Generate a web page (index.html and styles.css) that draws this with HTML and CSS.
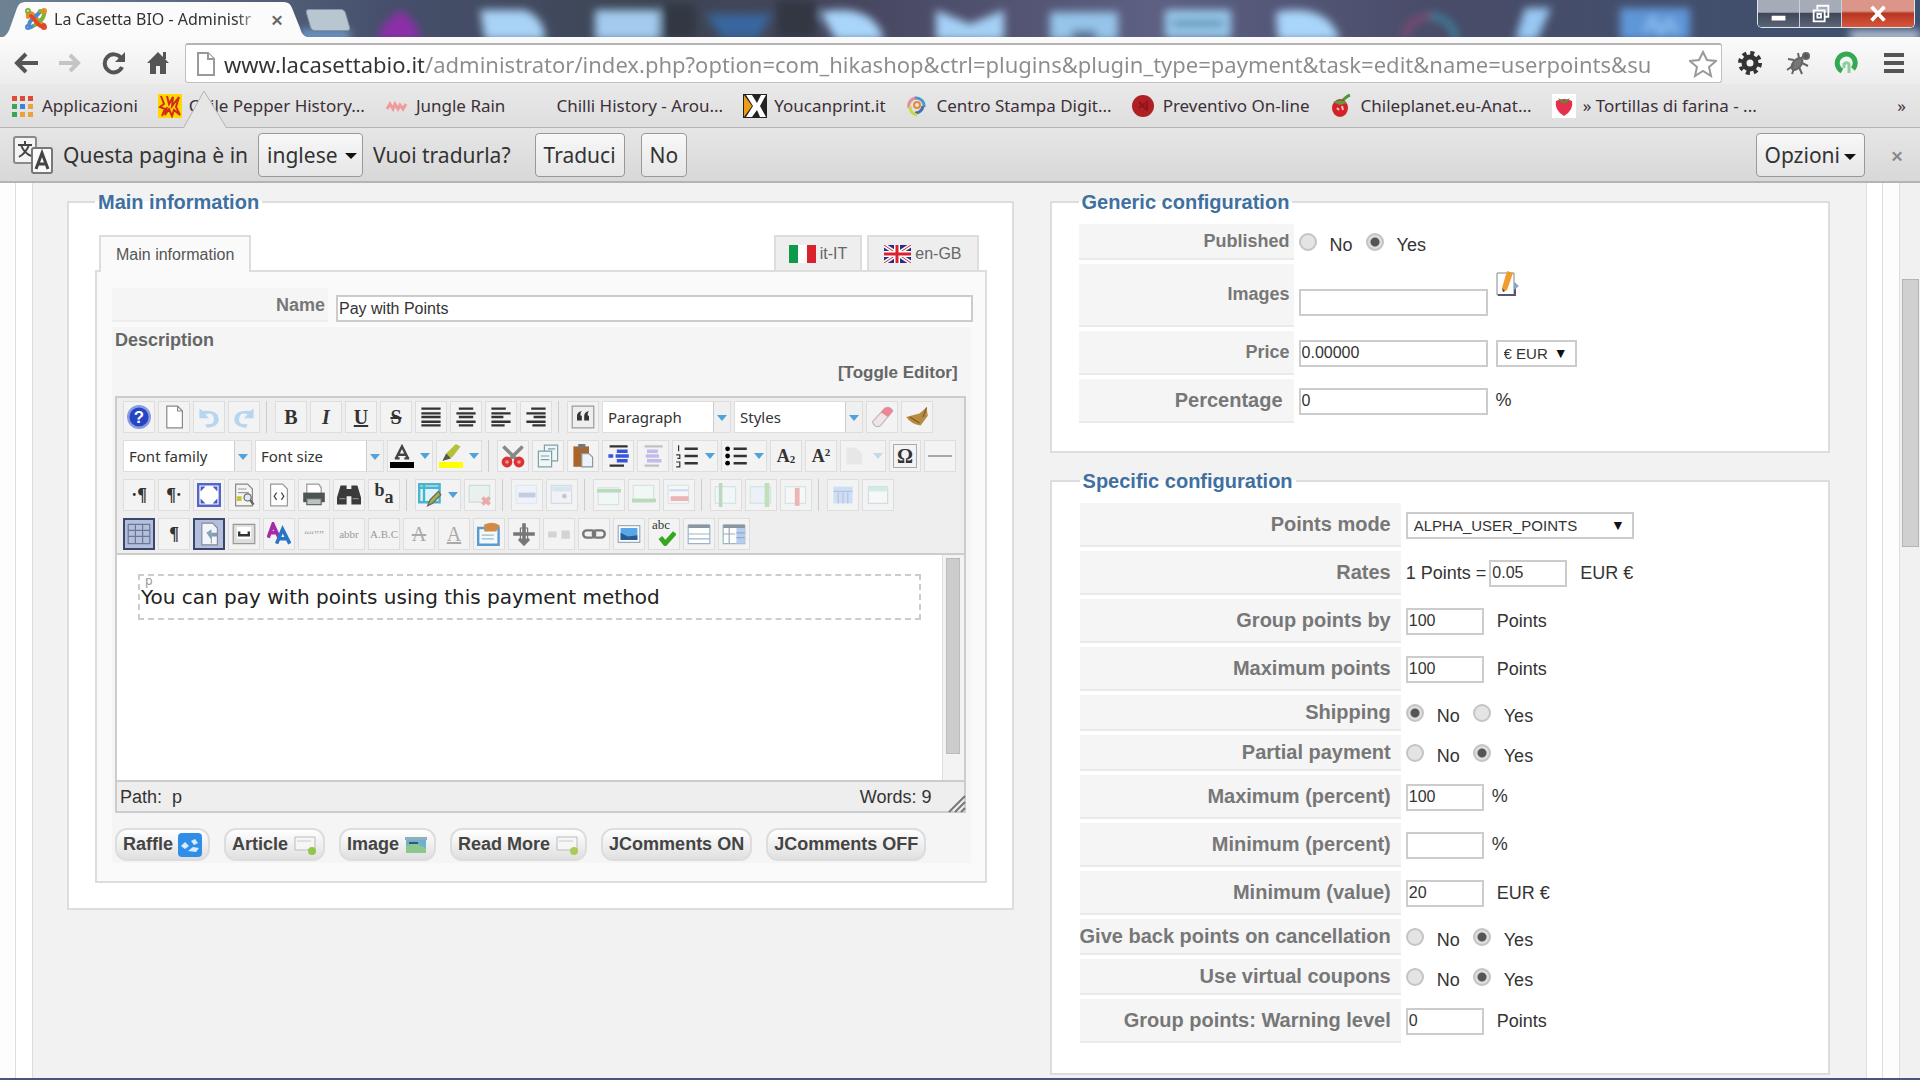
FILE: index.html
```html
<!DOCTYPE html>
<html lang="it">
<head>
<meta charset="UTF-8">
<title>La Casetta BIO - Administration</title>
<link rel="stylesheet" href="styles.css">
</head>
<body>

<!-- window title bar -->
<div class="titlebar">
	<svg class="wallpaper" viewBox="0 0 1920 37" preserveAspectRatio="none">
		<defs>
			<filter id="soft" x="-20%" y="-50%" width="140%" height="200%"><feGaussianBlur stdDeviation="4"/></filter>
			<linearGradient id="sky" x1="0" x2="1" y1="0" y2="0">
				<stop offset="0" stop-color="#6d8294"/><stop offset=".2" stop-color="#46506c"/><stop offset=".34" stop-color="#3d4553"/>
				<stop offset=".45" stop-color="#474760"/><stop offset=".6" stop-color="#5d6083"/><stop offset=".75" stop-color="#484c68"/><stop offset="1" stop-color="#3d5170"/>
			</linearGradient>
		</defs>
		<rect width="1920" height="37" fill="url(#sky)"/>
		<g filter="url(#soft)">
			<path d="M300 30h50v10h-50z" fill="#6f9ccc"/>
			<path d="M378 40q0-14 22-30q20 14 20 30z" fill="#8c2fa8"/>
			<path d="M480 10h45q20 8 20 30h-60z" fill="#a9d2f7"/>
			<path d="M595 10h65v30h-65z" fill="#a2cbee"/>
			<path d="M662 4h34v34h-34zM776 0h40v38h-40z" fill="#303743"/>
			<path d="M706 14h66l-14 24h-36z" fill="#37669f"/>
			<path d="M820 12q54-10 64 28h-48z" fill="#a9d5fa"/>
			<path d="M936 10l34 14 34-14v30h-68z" fill="#a4d0f6"/>
			<path d="M1050 12h68v28h-68z" fill="#96c4ea"/>
			<path d="M1072 30h24v10h-24z" fill="#5b7999"/>
			<path d="M1165 10h66v28h-66z" fill="#99caed"/>
			<path d="M1172 20h52v7h-52z" fill="#5b8eb0"/>
			<path d="M1276 12q52-10 64 28h-62z" fill="#a9d5fa"/>
			<path d="M1404 40a26 26 0 0 1 26-24" fill="none" stroke="#83486f" stroke-width="6"/>
			<path d="M1430 16a26 26 0 0 1 26 24" fill="none" stroke="#3c86a5" stroke-width="6"/>
			<path d="M1525 8h26l-14 32h-22z" fill="#97c7f2"/>
			<path d="M1620 8h70v32h-70z" fill="#5e96d8"/>
			<path d="M1645 32l8-14 8 16 8-14 8 14" fill="none" stroke="#8fc1f2" stroke-width="4"/>
			<path d="M1850 31h70v9h-70z" fill="#c3d3e2"/>
		</g>
	</svg>
	<div class="tab">
		<svg class="tab-shape" viewBox="0 0 304 37" preserveAspectRatio="none"><path d="M0 37Q5 35 8 25L14 8Q16 2 22 2H281Q287 2 289 8L297 28Q299 36 304 37z" fill="#fbfbfb"/></svg>
		<svg class="ico24 tab-ico" viewBox="0 0 24 24" fill="none" stroke-width="4" stroke-linecap="round">
			<path d="M4 10q-1-4 2-4t6 5l6 6" stroke="#f08c1e"/><path d="M9 19q-4 3-4-1t5-7l6-6" stroke="#4a8bd0"/>
			<path d="M16 4q5 0 4 4t-4 6l-5 4" stroke="#7ab33c"/><path d="M7 9l8 9q4 3 5 0" stroke="#e0452c"/>
			<circle cx="4" cy="4" r="1" stroke="#7ab33c"/><circle cx="20" cy="4" r="1" stroke="#f08c1e"/><circle cx="4" cy="20" r="1" stroke="#4a8bd0"/><circle cx="20" cy="20" r="1" stroke="#e0452c"/>
		</svg>
		<span class="tab-title">La Casetta BIO - Administr</span>
		<button class="tab-close" aria-label="Chiudi scheda">×</button>
	</div>
	<button class="tab-new" aria-label="Nuova scheda"></button>
	<div class="winbtns">
		<button aria-label="Riduci"><svg viewBox="0 0 24 24"><path d="M4 14h15v5H4z" fill="#fff"/></svg></button>
		<button aria-label="Ripristina"><svg viewBox="0 0 24 24" fill="none" stroke="#fff" stroke-width="2"><path d="M8 7V3h12v12h-4"/><path d="M4 8h12v12H4zM8 12h4v4H8z"/></svg></button>
		<button class="win-close" aria-label="Chiudi"><svg viewBox="0 0 24 24"><path d="M5 4l14 15M19 4L5 19" stroke="#fff" stroke-width="4"/></svg></button>
	</div>
</div>

<!-- navigation -->
<div class="navbar">
	<button class="nav" aria-label="Indietro"><svg viewBox="0 0 24 24" fill="none" stroke="#555" stroke-width="4"><path d="M24 12H4M12 3L3 12l9 9"/></svg></button>
	<button class="nav" aria-label="Avanti"><svg viewBox="0 0 24 24" fill="none" stroke="#c4c4c4" stroke-width="4"><path d="M1 12h18M12 4l8 8-8 8"/></svg></button>
	<button class="nav" aria-label="Ricarica"><svg viewBox="0 0 24 24" fill="none" stroke="#555" stroke-width="4"><path d="M20 16a9 9 0 1 1-1-9"/><path d="M23 1v10H13z" fill="#555" stroke="none"/></svg></button>
	<button class="nav" aria-label="Pagina iniziale"><svg viewBox="0 0 24 24" fill="#555"><path d="M12 1l11 11h-3v11h-6v-8h-4v8H4V12H1z"/><path d="M17 1h3v7h-3z"/></svg></button>
	<div class="omnibox">
		<svg class="ico24" viewBox="0 0 24 24" fill="#fff" stroke="#999" stroke-width="2"><path d="M4 1h10l6 6v16H4z"/><path d="M14 1v6h6"/></svg>
		<input type="text" class="url" aria-label="Indirizzo" value="www.lacasettabio.it/administrator/index.php?option=com_hikashop&amp;ctrl=plugins&amp;plugin_type=payment&amp;task=edit&amp;name=userpoints&amp;su">
		<button class="star" aria-label="Preferiti"><svg viewBox="0 0 28 28" fill="#fff" stroke="#999" stroke-width="2"><path d="M14 2l4 8 9 1-7 6 2 9-8-5-8 5 2-9-7-6 9-1z"/></svg></button>
	</div>
	<button class="nav" aria-label="Impostazioni"><svg viewBox="0 0 24 24" fill="none" stroke="#333"><circle cx="12" cy="12" r="6" stroke-width="5"/><circle cx="12" cy="12" r="10" stroke-width="4" stroke-dasharray="4 3.85"/></svg></button>
	<button class="nav" aria-label="Firebug"><svg viewBox="0 0 24 24" stroke="#666" stroke-width="2"><ellipse cx="11" cy="13" rx="4" ry="7" transform="rotate(40 11 13)" fill="#777"/><path d="M15 7l6-4M8 9L2 8M8 14l-7 5M13 16l3 7M16 12l6 3M13 7l-1-5M8 18l-2 5" fill="none"/><circle cx="20" cy="5" r="3" fill="#555"/></svg></button>
	<button class="nav" aria-label="Estensione"><svg viewBox="0 0 24 24" fill="none" stroke="#35a853" stroke-width="5"><path d="M8 20A9 9 0 1 1 19 18"/><path d="M15 22v-9a3 3 0 0 0-5 0v4" stroke="#8ccf9c" stroke-width="3"/></svg></button>
	<button class="nav" aria-label="Menu"><svg viewBox="0 0 24 24" fill="#555"><path d="M2 2h20v4H2zM2 10h20v4H2zM2 18h20v4H2z"/></svg></button>
</div>

<!-- bookmarks -->
<div class="bookmarks">
	<a href="#"><svg class="ico24" viewBox="0 0 24 24"><path d="M1 2h5v5H1zM9 2h5v5H9zM17 2h5v5h-5z" fill="#dd4b39"/><path d="M1 10h5v5H1z" fill="#3da35a"/><path d="M9 10h5v5H9z" fill="#3b82d8"/><path d="M17 10h5v5h-5z" fill="#e8a33d"/><path d="M1 18h5v5H1z" fill="#3da35a"/><path d="M9 18h5v5H9zM17 18h5v5h-5z" fill="#e8a33d"/></svg>Applicazioni</a>
	<a href="#"><svg class="ico24" viewBox="0 0 24 24"><path d="M0 0h24v24H0z" fill="#ffd800"/><path d="M3 2l3 8-4 3 5 2-3 7M9 2l2 8 4-7-1 9 7-9-3 10 4 8-6-5-2 6-3-7-4 6 2-8" fill="none" stroke="#d42a1c" stroke-width="2"/></svg>Chile Pepper History...</a>
	<a href="#"><svg class="ico24" viewBox="0 0 24 24"><path d="M2 15l3-5 3 5 2-5 3 5 2-4 3 4 3-5" fill="none" stroke="#f29a9a" stroke-width="3"/></svg>Jungle Rain</a>
	<a href="#"><svg class="ico24" viewBox="0 0 24 24"></svg>Chilli History - Arou...</a>
	<a href="#"><svg class="ico24" viewBox="0 0 24 24"><path d="M0 0h24v24H0z" fill="#222"/><path d="M1 1l8 11-8 11z" fill="#f09a1a"/><path d="M3 1h6l5 8 4-8h5l-6 11 6 11h-6l-3-7-5 7H3l7-11z" fill="#fff"/></svg>Youcanprint.it</a>
	<a href="#"><svg class="ico24" viewBox="0 0 24 24" fill="none" stroke-width="3"><path d="M3 14a8 8 0 0 1 7-10" stroke="#e88a9a"/><path d="M9 4a8 8 0 0 1 9 9" stroke="#4a98d0"/><path d="M17 12a8 8 0 0 1-8 7" stroke="#4870a8"/><path d="M4 12q0 8 7 9" stroke="#c8d84a"/><circle cx="11" cy="11" r="3" stroke="#e8883a" stroke-width="2"/></svg>Centro Stampa Digit...</a>
	<a href="#"><svg class="ico24" viewBox="0 0 24 24"><circle cx="11" cy="12" r="11" fill="#b01f24"/><path d="M7 8l8 8M15 7v10M7 14l6-5" stroke="#8c1519" stroke-width="2"/></svg>Preventivo On-line</a>
	<a href="#"><svg class="ico24" viewBox="0 0 24 24"><path d="M11 8Q17 2 20 1" fill="none" stroke="#4d9a3a" stroke-width="3"/><ellipse cx="10" cy="14" rx="8" ry="9" fill="#d3222a"/><path d="M3 8q8-4 14 1l-7 2z" fill="#58a040"/><path d="M7 14l2 2M12 12l1 4" stroke="#fbb" stroke-width="2"/></svg>Chileplanet.eu-Anat...</a>
	<a href="#"><svg class="ico24" viewBox="0 0 24 24"><path d="M0 0h24v24H0z" fill="#fff"/><path d="M12 22Q2 16 4 7q8-4 16 0 2 9-8 15z" fill="#e62e4d"/><path d="M6 4l6 3 6-3-3 5H9z" fill="#5d8a3a"/></svg>» Tortillas di farina - ...</a>
	<a href="#" class="more">»</a>
</div>

<!-- translate bar -->
<div class="infobar">
	<svg class="pointer" viewBox="0 0 42 38"><path d="M0 38L20 1l22 37z" fill="#e6e6e6"/><path d="M0 37L20 1l22 36" fill="none" stroke="#b4b4b4"/></svg>
	<svg class="translate-ico" viewBox="0 0 40 38"><rect x="1" y="1" width="22" height="26" rx="2" fill="#f4f4f4" stroke="#8a8a8a" stroke-width="2"/><path d="M5 9h14M12 5v4M16 9q-3 8-10 12M8 9q3 8 10 11" fill="none" stroke="#444" stroke-width="2"/><rect x="19" y="12" width="20" height="25" rx="2" fill="#fafafa" stroke="#777" stroke-width="2"/><path d="M23 33l6-16 6 16M25 28h8" fill="none" stroke="#444" stroke-width="3"/></svg>
	<label for="lang">Questa pagina è in</label>
	<span class="pick"><select id="lang" class="barbtn"><option>inglese</option></select></span>
	<span>Vuoi tradurla?</span>
	<button class="barbtn translate">Traduci</button>
	<button class="barbtn">No</button>
	<button class="barbtn options">Opzioni<i class="caret"></i></button>
	<button class="bar-close" aria-label="Chiudi barra">×</button>
</div>

<!-- page -->
<div class="page">
<div class="frame">
<div class="columns">

	<div class="col">
	<fieldset class="box main-box">
		<legend>Main information</legend>
		<div class="langtabs">
			<button class="ltab active">Main information</button>
			<button class="ltab it"><svg class="flag" viewBox="0 0 27 18" preserveAspectRatio="none"><path d="M0 0h27v18H0z" fill="#fff"/><path d="M0 0h9v18H0z" fill="#0d9a4b"/><path d="M18 0h9v18h-9z" fill="#d8232f"/></svg>it-IT</button>
			<button class="ltab gb"><svg class="flag" viewBox="0 0 27 18"><path d="M0 0h27v18H0z" fill="#23308a"/><path d="M0 0l27 18M27 0L0 18" stroke="#fff" stroke-width="4"/><path d="M0 0l27 18M27 0L0 18" stroke="#d8232f" stroke-width="1"/><path d="M13 0v18M0 9h27" stroke="#fff" stroke-width="6"/><path d="M13 0v18M0 9h27" stroke="#d8232f" stroke-width="3"/></svg>en-GB</button>
		</div>
		<div class="panel">
			<div class="name-row">
				<label for="name">Name</label>
				<input type="text" id="name" value="Pay with Points">
			</div>
			<div class="desc">
				<div class="desc-title">Description</div>
				<div class="toggle"><a href="#">[Toggle Editor]</a></div>
				<div class="editor">
					<div class="toolbar">
						<div class="trow">
							<button class="tb" title="Help"><svg viewBox="0 0 20 20"><circle cx="10" cy="10" r="9" fill="#2545c4" stroke="#8a9ce0" stroke-width="2"/><text x="10" y="15" class="qm">?</text></svg></button>
							<button class="tb" title="New"><svg viewBox="0 0 20 20"><path d="M4 1h9l4 4v14H4z" fill="#fff" stroke="#888"/><path d="M13 1v4h4" fill="none" stroke="#888"/></svg></button>
							<button class="tb off" title="Undo"><svg viewBox="0 0 20 20"><path d="M2 3v8h8L7 8q6-3 7 3t-7 5l1 3q11-1 10-8T5 5z" fill="#4aa0e6"/></svg></button>
							<button class="tb off" title="Redo"><svg viewBox="0 0 20 20"><path d="M18 3v8h-8l3-3Q7 5 6 11t7 5l-1 3Q1 18 2 11T15 5z" fill="#4aa0e6"/></svg></button>
							<i class="sep"></i>
							<button class="tb b">B</button>
							<button class="tb i">I</button>
							<button class="tb u">U</button>
							<button class="tb s">S</button>
							<button class="tb" title="Justify"><svg viewBox="0 0 20 20"><path d="M2 3h16M2 7h16M2 10h16M2 14h16M2 17h16" stroke="#333" stroke-width="2"/></svg></button>
							<button class="tb" title="Center"><svg viewBox="0 0 20 20"><path d="M4 3h12M2 7h16M4 10h12M2 14h16M4 17h12" stroke="#333" stroke-width="2"/></svg></button>
							<button class="tb" title="Left"><svg viewBox="0 0 20 20"><path d="M2 3h12M2 7h16M2 10h10M2 14h16M2 17h11" stroke="#333" stroke-width="2"/></svg></button>
							<button class="tb" title="Right"><svg viewBox="0 0 20 20"><path d="M6 3h12M2 7h16M8 10h10M2 14h16M7 17h11" stroke="#333" stroke-width="2"/></svg></button>
							<i class="sep"></i>
							<button class="tb" title="Blockquote"><svg viewBox="0 0 20 20"><path d="M1 1h18v18H1z" fill="#eee" stroke="#999"/><path d="M5 13V9q0-3 4-4-2 2-1 4h1v4zM11 13V9q0-3 4-4-2 2-1 4h1v4z" fill="#333"/></svg></button>
							<span class="list"><select aria-label="Format"><option>Paragraph</option></select></span>
							<span class="list"><select aria-label="Styles"><option>Styles</option></select></span>
							<button class="tb" title="Remove formatting"><svg viewBox="0 0 20 20"><path d="M2 14L12 3q4-3 7 2L9 17q-5 3-7-3z" fill="#f0e4e4" stroke="#bbb"/><path d="M9 6l3-3q4-3 7 2l-4 5z" fill="#ee8594"/></svg></button>
							<button class="tb" title="Cleanup"><svg viewBox="0 0 20 20"><path d="M18 2l1 7-6 8q-8-1-12-7l11-3z" fill="#b98a42"/><path d="M18 2l-3 8M4 10l8 5" stroke="#7c5a22" fill="none"/></svg></button>
						</div>
						<div class="trow">
							<span class="list"><select aria-label="Font family"><option>Font family</option></select></span>
							<span class="list"><select aria-label="Font size"><option>Font size</option></select></span>
							<button class="tb split"><svg viewBox="0 0 20 20"><path d="M0 15h20v5H0z" fill="#000"/><path d="M5 12l5-10 5 10M7 9h6M4 12h4M12 12h4" fill="none" stroke="#444" stroke-width="2"/></svg><i class="dd"></i></button>
							<button class="tb split"><svg viewBox="0 0 20 20"><path d="M0 15h20v5H0z" fill="#ff0"/><path d="M3 14l3-6 8-8 4 2-7 9z" fill="#b6bf3a"/><path d="M3 14l3-6 4 4z" fill="#555"/></svg><i class="dd"></i></button>
							<i class="sep"></i>
							<button class="tb" title="Cut"><svg viewBox="0 0 20 20"><path d="M2 2l12 12M18 2L6 14" stroke="#888" stroke-width="3"/><circle cx="5" cy="15" r="3" fill="#e98" stroke="#d8343a" stroke-width="3"/><circle cx="15" cy="15" r="3" fill="#e98" stroke="#d8343a" stroke-width="3"/></svg></button>
							<button class="tb" title="Copy"><svg viewBox="0 0 20 20" fill="#eef6f8" stroke="#7f9fa8"><path d="M7 1h11v13H7z"/><path d="M2 6h11v13H2z"/><path d="M4 10h7M4 13h7M10 4h6"/></svg></button>
							<button class="tb" title="Paste"><svg viewBox="0 0 20 20"><path d="M2 2h13v17H2z" fill="#a9642a"/><path d="M6 0h6v4H6z" fill="#777"/><path d="M9 8h6l3 3v8H9z" fill="#eef2f8" stroke="#8a98a8"/></svg></button>
							<button class="tb" title="Indent"><svg viewBox="0 0 20 20"><path d="M3 2h15M3 18h12" stroke="#333" stroke-width="2"/><path d="M9 6h9M8 10h11M9 14h9M2 10h4" stroke="#3a56d8" stroke-width="3"/></svg></button>
							<button class="tb off" title="Outdent"><svg viewBox="0 0 20 20"><path d="M3 2h15M3 18h12" stroke="#666" stroke-width="2"/><path d="M5 6h9M4 10h11M5 14h12" stroke="#6a56d8" stroke-width="3"/></svg></button>
							<button class="tb split"><svg viewBox="0 0 20 20"><path d="M8 4h11M8 10h11M8 16h11" stroke="#333" stroke-width="2"/><path d="M3 1v5M1 9h3v3H2M1 15h3v4H1" fill="none" stroke="#333" stroke-width="1"/></svg><i class="dd"></i></button>
							<button class="tb split"><svg viewBox="0 0 20 20"><path d="M8 4h11M8 10h11M8 16h11" stroke="#333" stroke-width="2"/><circle cx="3" cy="4" r="2"/><circle cx="3" cy="10" r="2"/><circle cx="3" cy="16" r="2"/></svg><i class="dd"></i></button>
							<button class="tb a">A<sub>2</sub></button>
							<button class="tb a">A<sup>2</sup></button>
							<button class="tb split off faint"><svg viewBox="0 0 20 20"><path d="M3 3h8l5 5v9H3z" fill="#ccc"/></svg><i class="dd"></i></button>
							<button class="tb omega">Ω</button>
							<button class="tb" title="Rule"><svg viewBox="0 0 20 20"><path d="M0 10h20" stroke="#777" stroke-width="1"/></svg></button>
						</div>
						<div class="trow">
							<button class="tb a">·¶</button>
							<button class="tb a">¶·</button>
							<button class="tb" title="Fullscreen"><svg viewBox="0 0 20 20"><path d="M1 1h18v18H1z" fill="#fff" stroke="#5566c8" stroke-width="2"/><path d="M3 3h4L3 7zM17 3h-4l4 4zM3 17h4l-4-4zM17 17h-4l4-4z" fill="#4458c8"/></svg></button>
							<button class="tb" title="Preview"><svg viewBox="0 0 20 20"><path d="M3 1h10l4 4v14H3z" fill="#f4f4f0" stroke="#888"/><path d="M5 5h7M5 8h9" stroke="#999"/><path d="M4 11h4v4H4z" fill="#c3c53a"/><circle cx="13" cy="12" r="3" fill="#dfe8f8" stroke="#666"/><path d="M15 14l3 4" stroke="#666" stroke-width="2"/></svg></button>
							<button class="tb" title="Source"><svg viewBox="0 0 20 20"><path d="M3 1h10l4 4v14H3z" fill="#fff" stroke="#999"/><path d="M8 8l-2 3 2 3M12 8l2 3-2 3" fill="none" stroke="#444" stroke-width="1"/></svg></button>
							<button class="tb" title="Print"><svg viewBox="0 0 20 20"><path d="M4 1h10l2 3v5H4z" fill="#fff" stroke="#999"/><path d="M1 8h18v8H1z" fill="#4c5553"/><path d="M4 13h12v5H4z" fill="#b8c2be" stroke="#666"/></svg></button>
							<button class="tb" title="Find"><svg viewBox="0 0 20 20" fill="#3a3a3a"><path d="M3 2h5v3h4V2h5l3 10v6h-8v-7H8v7H0v-6z"/><path d="M2 13h5M13 13h5" stroke="#888"/></svg></button>
							<button class="tb ba">b<sub>a</sub></button>
							<i class="sep"></i>
							<button class="tb split"><svg viewBox="0 0 20 20"><path d="M1 1h17v15H1z" fill="#dff4f8" stroke="#4ab4cc" stroke-width="2"/><path d="M1 4h17M5 1v15" stroke="#4ab4cc" stroke-width="2"/><path d="M8 19l2-5 7-7 2 3-7 7z" fill="#a5ad4c" stroke="#666"/></svg><i class="dd"></i></button>
							<button class="tb off"><svg viewBox="0 0 20 20"><path d="M1 2h17v14H1z" fill="#d8ece4" stroke="#7bb"/><path d="M12 12l6 6M18 12l-6 6" stroke="#d22" stroke-width="3"/></svg></button>
							<i class="sep"></i>
							<button class="tb off"><svg viewBox="0 0 20 20"><path d="M1 2h17v15H1z" fill="#eef" stroke="#adf"/><path d="M3 8h14v4H3z" fill="#68c"/></svg></button>
							<button class="tb off"><svg viewBox="0 0 20 20"><path d="M1 2h17v15H1z" fill="#eef" stroke="#8bd"/><path d="M2 3h16v4H2z" fill="#acd"/><circle cx="12" cy="11" r="2" fill="#777"/></svg></button>
							<i class="sep"></i>
							<button class="tb off"><svg viewBox="0 0 20 20"><path d="M1 4h17v14H1z" fill="#eff" stroke="#9cb"/><path d="M0 5h20v3H0z" fill="#5a5"/></svg></button>
							<button class="tb off"><svg viewBox="0 0 20 20"><path d="M1 2h17v14H1z" fill="#eff" stroke="#9cb"/><path d="M0 13h20v3H0z" fill="#5a5"/></svg></button>
							<button class="tb off"><svg viewBox="0 0 20 20"><path d="M1 2h17v15H1z" fill="#fff" stroke="#acd"/><path d="M2 5h16v2H2z" fill="#8bf"/><path d="M3 11h15v4H3z" fill="#d44"/></svg></button>
							<i class="sep"></i>
							<button class="tb off"><svg viewBox="0 0 20 20"><path d="M1 3h17v14H1z" fill="#eff" stroke="#9cc"/><path d="M4 0h3v20H4z" fill="#5a5"/></svg></button>
							<button class="tb off"><svg viewBox="0 0 20 20"><path d="M1 3h17v14H1z" fill="#def" stroke="#9cc"/><path d="M13 0h4v20h-4z" fill="#6b5"/></svg></button>
							<button class="tb off"><svg viewBox="0 0 20 20"><path d="M1 3h17v14H1z" fill="#fff" stroke="#9cc"/><path d="M9 4h4v15H9z" fill="#d44"/></svg></button>
							<i class="sep"></i>
							<button class="tb off"><svg viewBox="0 0 20 20"><path d="M2 3h16v14H2z" fill="#8bf"/><path d="M6 8v9M10 8v9M14 8v9M2 7h16" stroke="#56a"/></svg></button>
							<button class="tb off"><svg viewBox="0 0 20 20"><path d="M2 3h16v14H2z" fill="#fff" stroke="#8bc"/><path d="M2 3h16v4H2z" fill="#9dc"/></svg></button>
						</div>
						<div class="trow">
							<button class="tb on"><svg viewBox="0 0 20 20"><path d="M1 2h18v16H1zM7 2v16M13 2v16M1 7h18M1 12h18" fill="none" stroke="#6c7794"/></svg></button>
							<button class="tb a">¶</button>
							<button class="tb on"><svg viewBox="0 0 20 20"><path d="M4 1h9l4 4v14H4z" fill="#f2f6fa" stroke="#889"/><path d="M8 9l4-3v3h5v3h-5v3z" fill="#7e9cba" /><path d="M8 9h4v9" stroke="#9aa" fill="none"/></svg></button>
							<button class="tb"><svg viewBox="0 0 20 20"><path d="M1 2h18v16H1z" fill="#ddd" stroke="#999"/><path d="M4 4h12v10H4z" fill="#fff"/><path d="M6 8v3h8V8" fill="none" stroke="#333" stroke-width="2"/></svg></button>
							<button class="tb"><svg viewBox="0 0 20 20" fill="none" stroke-width="3"><path d="M1 13L5 2l5 11M3 9h5" stroke="#a52ba8"/><path d="M8 18l5-12 6 12M10 14h7" stroke="#2a74c8"/></svg></button>
							<button class="tb mini">““””</button>
							<button class="tb mini">abbr</button>
							<button class="tb mini">A.B.C</button>
							<button class="tb gray s">A</button>
							<button class="tb gray u">A</button>
							<button class="tb"><svg viewBox="0 0 20 20"><path d="M1 5h17v14H1z" fill="#f2f8fc" stroke="#5b9bd0" stroke-width="2"/><path d="M4 11h10M4 14h10" stroke="#9bc"/><path d="M6 2q8-3 13 1l-3 5H6z" fill="#d28a48"/></svg></button>
							<button class="tb"><svg viewBox="0 0 20 20" fill="none" stroke="#777" stroke-width="3"><path d="M10 1v18M1 10h18M6 14l4 4 4-4"/><path d="M7 5h6v10H7z" stroke-width="1"/></svg></button>
							<button class="tb off"><svg viewBox="0 0 20 20"><path d="M1 8h7v5H1zM12 7h7v7h-7z" fill="#999"/></svg></button>
							<button class="tb"><svg viewBox="0 0 20 20" fill="none" stroke="#777" stroke-width="2"><rect x="1" y="7" width="10" height="6" rx="3"/><rect x="9" y="7" width="10" height="6" rx="3"/></svg></button>
							<button class="tb"><svg viewBox="0 0 20 20"><path d="M1 3h18v14H1z" fill="#fff" stroke="#9ab"/><path d="M3 5h14v10H3z" fill="#5aa6e6"/><path d="M3 15v-6l6 3 8-1v4z" fill="#2a5a92"/></svg></button>
							<button class="tb abc"><span>abc</span><svg viewBox="0 0 20 20"><path d="M7 13l4 5L19 9" fill="none" stroke="#35a820" stroke-width="4"/></svg></button>
							<button class="tb"><svg viewBox="0 0 20 20"><path d="M1 3h18v15H1z" fill="#fff" stroke="#9bb4cc"/><path d="M1 2h18v3H1z" fill="#8a96a2"/><path d="M1 10h18M1 14h18" stroke="#9bb4cc"/></svg></button>
							<button class="tb"><svg viewBox="0 0 20 20"><path d="M1 3h18v15H1z" fill="#fff" stroke="#9bb"/><path d="M1 2h18v3H1z" fill="#8a96a2"/><path d="M12 5h7v13h-7z" fill="#b4cdf0"/><path d="M12 9h7M12 13h7M6 5v13M1 10h10" stroke="#9aa8bb"/></svg></button>
						</div>
					</div>
					<div class="edit-area">
						<div class="edit-body">
							<div class="edit-p"><span class="ptag">p</span>You can pay with points using this payment method</div>
						</div>
						<div class="escroll"><div class="ethumb"></div></div>
					</div>
					<div class="status">
						<span>Path:&nbsp; p</span>
						<span>Words: 9</span>
						<svg class="grip" viewBox="0 0 18 18"><path d="M1 17L17 1M7 17L17 7M13 17l4-4" stroke="#777" stroke-width="2"/></svg>
					</div>
				</div>
				<div class="xtd">
					<button>Raffle <svg class="ico24" viewBox="0 0 24 24"><rect width="24" height="24" rx="4" fill="#2f8fe8"/><path d="M3 13l4-4 4 4-4 3zM13 8l4-2 3 4-4 2zM10 18l5-4 6 1-3 4z" fill="#d8ecfc"/></svg></button>
					<button>Article <svg class="ico24" viewBox="0 0 24 24"><path d="M2 4h20v13H2z" fill="#f6f6f6" stroke="#bbb"/><path d="M4 8h14" stroke="#ccc"/><circle cx="19" cy="18" r="4" fill="#8ec84a"/></svg></button>
					<button>Image <svg class="ico24" viewBox="0 0 24 24"><path d="M1 4h22v3H1z" fill="#8fb0bc"/><path d="M2 7h20v13H2z" fill="#6fb0d0"/><path d="M2 13l8-3 12 5v5H2z" fill="#8cc88c"/><path d="M5 10h9" stroke="#357" stroke-width="2"/></svg></button>
					<button>Read More <svg class="ico24" viewBox="0 0 24 24"><path d="M2 4h20v13H2z" fill="#f6f6f6" stroke="#bbb"/><path d="M4 8h14" stroke="#ccc"/><circle cx="19" cy="18" r="4" fill="#a8cc5a"/></svg></button>
					<button>JComments ON</button>
					<button>JComments OFF</button>
				</div>
			</div>
		</div>
	</fieldset>
	</div>

	<div class="col">
	<fieldset class="box generic">
		<legend>Generic configuration</legend>
		<table class="params">
			<tr class="r-radio"><th>Published</th><td><input type="radio" name="pub" id="pub0"><label for="pub0">No</label><input type="radio" name="pub" id="pub1" checked><label for="pub1">Yes</label></td></tr>
			<tr class="r-img"><th><label for="images">Images</label></th><td><input type="text" class="long" id="images"><a href="#" class="pencil" title="Edit"><svg viewBox="0 0 24 26"><path d="M1 2h17v22H1z" fill="#fff" stroke="#888"/><path d="M2 24h17V12" fill="none" stroke="#557" stroke-width="2"/><path d="M6 17l1 4 4-2 6-17-6-2z" fill="#f29a2c"/><path d="M6 17l1 4 2-1z" fill="#543"/><path d="M18 11l5 4-5 4z" fill="#88a8c8"/></svg></a></td></tr>
			<tr><th><label for="price">Price</label></th><td><input type="text" class="long" id="price" value="0.00000"><span class="drop cur"><select aria-label="Currency"><option>€ EUR</option></select></span></td></tr>
			<tr><th class="big"><label for="perc">Percentage</label></th><td><input type="text" class="long" id="perc" value="0">%</td></tr>
		</table>
	</fieldset>

	<fieldset class="box specific">
		<legend>Specific configuration</legend>
		<table class="params">
			<tr><th><label for="mode">Points mode</label></th><td><span class="drop mode"><select id="mode"><option>ALPHA_USER_POINTS</option></select></span></td></tr>
			<tr><th><label for="rates">Rates</label></th><td><span class="pre">1 Points =</span><input type="text" id="rates" value="0.05"><span>EUR €</span></td></tr>
			<tr><th><label for="group">Group points by</label></th><td><input type="text" id="group" value="100"><span>Points</span></td></tr>
			<tr><th><label for="maxp">Maximum points</label></th><td><input type="text" id="maxp" value="100"><span>Points</span></td></tr>
			<tr class="r-radio"><th>Shipping</th><td><input type="radio" name="ship" id="ship0" checked><label for="ship0">No</label><input type="radio" name="ship" id="ship1"><label for="ship1">Yes</label></td></tr>
			<tr class="r-radio"><th>Partial payment</th><td><input type="radio" name="part" id="part0"><label for="part0">No</label><input type="radio" name="part" id="part1" checked><label for="part1">Yes</label></td></tr>
			<tr><th><label for="maxpc">Maximum (percent)</label></th><td><input type="text" id="maxpc" value="100">%</td></tr>
			<tr><th><label for="minpc">Minimum (percent)</label></th><td><input type="text" id="minpc">%</td></tr>
			<tr><th><label for="minv">Minimum (value)</label></th><td><input type="text" id="minv" value="20"><span>EUR €</span></td></tr>
			<tr class="r-radio"><th>Give back points on cancellation</th><td><input type="radio" name="back" id="back0"><label for="back0">No</label><input type="radio" name="back" id="back1" checked><label for="back1">Yes</label></td></tr>
			<tr class="r-radio"><th>Use virtual coupons</th><td><input type="radio" name="coup" id="coup0"><label for="coup0">No</label><input type="radio" name="coup" id="coup1" checked><label for="coup1">Yes</label></td></tr>
			<tr><th><label for="warn">Group points: Warning level</label></th><td><input type="text" id="warn" value="0"><span>Points</span></td></tr>
		</table>
	</fieldset>
	</div>

</div>
</div>
<div class="pscroll"><div class="pthumb"></div></div>
</div>
<div class="taskbar"></div>

</body>
</html>
```
FILE: styles.css
```css
* {
	box-sizing: border-box;
}
body {
	margin: 0;
	height: 100vh;
	display: flex;
	flex-direction: column;
	overflow: hidden;
	background: #fff;
	font-family: "Liberation Sans", Arial, sans-serif;
	font-size: 18px;
	color: #333;
}
button, input, select {
	font: inherit;
	color: inherit;
	margin: 0;
	padding: 0;
	border: 0;
	border-radius: 0;
	background: none;
	appearance: none;
}
a {
	color: inherit;
	text-decoration: none;
}
svg {
	display: block;
	flex: none;
}
.ico24 {
	width: 24px;
	height: 24px;
}

/* title bar */
.titlebar {
	position: relative;
	flex: none;
	display: flex;
	align-items: flex-start;
	height: 37px;
	padding-left: 3px;
	font-family: "Noto Sans", sans-serif;
}
.wallpaper {
	position: absolute;
	left: 0;
	top: 0;
	width: 100%;
	height: 37px;
}
.tab {
	position: relative;
	display: flex;
	align-items: center;
	width: 304px;
	height: 37px;
	padding: 0 20px 0 21px;
	font-size: 16px;
}
.tab-shape {
	position: absolute;
	left: 0;
	top: 0;
	width: 100%;
	height: 100%;
}
.tab-ico, .tab-title, .tab-close {
	position: relative;
}
.tab-title {
	flex: 1;
	margin-left: 6px;
	white-space: nowrap;
	overflow: hidden;
	-webkit-mask-image: linear-gradient(90deg, #000 85%, transparent);
}
.tab-close {
	width: 20px;
	font-size: 22px;
	line-height: 24px;
	font-weight: 600;
	color: #666;
}
.tab-new {
	position: relative;
	width: 40px;
	height: 22px;
	margin: 9px 0 0 1px;
	border-radius: 4px;
	transform: skewX(16deg);
	background: #b7c6cf;
	border: 1px solid #8394a6;
}
.winbtns {
	position: relative;
	display: flex;
	margin-left: auto;
	margin-right: 5px;
	height: 28px;
	border: 1px solid #dfe6ee;
	border-top: 0;
	border-radius: 0 0 5px 5px;
	overflow: hidden;
}
.winbtns button {
	display: flex;
	align-items: center;
	justify-content: center;
	width: 42px;
	border-right: 1px solid #c8d0da;
	background: linear-gradient(#a5acb8 0 45%, #3f4859 50%, #5b6476);
}
.winbtns .win-close {
	width: 72px;
	border-right: 0;
	background: linear-gradient(#dc9689 0 40%, #b93622 50%, #d5573c);
}
.winbtns svg {
	width: 22px;
	height: 22px;
}

/* navigation */
.navbar {
	flex: none;
	display: flex;
	align-items: center;
	height: 47px;
	padding: 5px 10px 0 14px;
	background: linear-gradient(#fbfbfb, #ededed);
}
.nav {
	width: 24px;
	margin-right: 20px;
}
.nav svg {
	width: 24px;
	height: 24px;
}
.omnibox + .nav {
	margin-left: 16px;
}
.omnibox ~ .nav {
	margin-right: 24px;
}
.nav:last-child {
	margin-right: 4px !important;
}
.omnibox {
	flex: 1;
	display: flex;
	align-items: center;
	height: 40px;
	margin-left: -5px;
	padding: 0 4px 0 8px;
	border: 1px solid #c0c0c0;
	border-top: 2px solid #b4b4b4;
	border-radius: 3px;
	background: #fff;
}
.url {
	flex: 1;
	min-width: 0;
	height: 36px;
	margin-left: 6px;
	font-family: "Noto Sans", sans-serif;
	font-size: 22px;
	background: linear-gradient(90deg, #333 0 200px, #8c8c8c 200px);
	-webkit-background-clip: text;
	background-clip: text;
	-webkit-text-fill-color: transparent;
}
.star svg {
	width: 28px;
	height: 28px;
}

/* bookmarks */
.bookmarks {
	flex: none;
	display: flex;
	align-items: center;
	gap: 20px;
	height: 43px;
	padding: 0 14px 0 11px;
	background: linear-gradient(#e9e9e9, #dedede);
	font-family: "Noto Sans", sans-serif;
	font-size: 17px;
	white-space: nowrap;
	color: #3c3038;
}
.bookmarks a {
	display: flex;
	align-items: center;
	gap: 7px;
}
.bookmarks .more {
	margin-left: auto;
}

/* translate bar */
.infobar {
	position: relative;
	flex: none;
	display: flex;
	align-items: center;
	gap: 10px;
	height: 56px;
	padding: 0 13px;
	border-top: 1px solid #b4b4b4;
	border-bottom: 2px solid #b4b4b4;
	background: linear-gradient(#e6e6e6, #d8d8d8);
	font-family: "Noto Sans", sans-serif;
	font-size: 21px;
	white-space: nowrap;
}
.pointer {
	position: absolute;
	left: 184px;
	top: -38px;
	width: 42px;
	height: 38px;
}
.translate-ico {
	width: 40px;
	height: 38px;
}
.barbtn {
	height: 44px;
	padding: 0 8px;
	border: 1px solid #999;
	border-radius: 4px;
	background: linear-gradient(#f8f8f8, #e6e6e6);
}
.pick {
	position: relative;
}
.pick select {
	padding-right: 24px;
}
.pick::after, .caret {
	border: 6px solid transparent;
	border-top-color: #111;
	border-bottom: 0;
}
.pick::after {
	content: "";
	position: absolute;
	right: 6px;
	top: 20px;
}
.caret {
	display: inline-block;
	margin: 0 0 3px 4px;
}
.translate {
	margin-left: 14px;
	margin-right: 6px;
}
.options {
	margin-left: auto;
}
.bar-close {
	width: 20px;
	margin-left: 12px;
	font-size: 22px;
	font-weight: 600;
	color: #888;
}

/* page */
.page {
	flex: 1;
	min-height: 0;
	display: flex;
	padding-left: 15px;
	overflow: hidden;
	background: #fdfdfd;
}
.frame {
	flex: 1;
	min-width: 0;
	margin-right: 16px;
	padding: 0 15px 0 16px;
	border-left: 1px solid #ddd;
	border-right: 1px solid #ddd;
	background: #fff;
}
.columns {
	display: grid;
	grid-template-columns: minmax(0, 946fr) minmax(0, 780fr);
	gap: 36px;
	height: 100%;
	padding: 7px 36px 0 34px;
	border-left: 1px solid #ddd;
	border-right: 1px solid #ddd;
	background: #f2f2f2;
}
.pscroll {
	width: 21px;
	padding-top: 96px;
	background: #f1f1f1;
	border-left: 1px solid #ddd;
}
.pthumb {
	width: 17px;
	height: 268px;
	margin: 0 auto;
	border: 1px solid #b4b4b4;
	background: #d0d0d0;
}
.taskbar {
	flex: none;
	height: 2px;
	background: #4a5678;
}
.box {
	min-width: 0;
	margin: 0;
	border: 2px solid #ddd;
	background: #fff;
}
.box legend {
	padding: 0 3px;
	line-height: 24px;
	font-size: 20px;
	font-weight: bold;
	color: #40709f;
}

/* left box */
.main-box {
	padding: 21px 25px 25px 26px;
}
.langtabs {
	display: flex;
	padding: 0 8px 0 4px;
}
.ltab {
	display: flex;
	align-items: center;
	height: 35px;
	padding: 0 15px;
	border: 2px solid #ddd;
	border-bottom: 0;
	background: #eee;
	font-size: 16px;
	color: #666;
}
.ltab.active {
	height: 37px;
	margin: 0 auto -2px 0;
	background: #fafafa;
	color: #555;
	z-index: 1;
}
.ltab.it {
	padding: 0 13px;
}
.ltab.gb {
	margin-left: 5px;
}
.flag {
	width: 27px;
	height: 18px;
	margin-right: 4px;
}
.panel {
	padding: 16px 12px 18px 15px;
	border: 2px solid #ddd;
	background: #fafafa;
}
.name-row {
	display: flex;
	align-items: flex-end;
	gap: 8px;
	height: 34px;
}
.name-row label {
	width: 216px;
	height: 34px;
	padding-right: 3px;
	line-height: 34px;
	text-align: right;
	font-weight: bold;
	color: #777;
	background: #f5f5f5;
	border-bottom: 2px solid #eee;
}
.name-row input {
	flex: 1;
}
input[type=text]:not(.url) {
	width: 78px;
	height: 27px;
	padding: 0 1px;
	border: 2px solid #ccc;
	background: #fff;
	font-size: 16px;
}
.desc {
	margin: 5px 2px 0 0;
	padding: 0 5px 2px 3px;
	background: #f5f5f5;
	color: #666;
}
.desc-title {
	height: 33px;
	line-height: 26px;
	font-weight: bold;
}
.toggle {
	height: 36px;
	padding-right: 8px;
	line-height: 26px;
	text-align: right;
	font-size: 17px;
	font-weight: bold;
}

/* editor */
.editor {
	border: 2px solid #ccc;
	background: #fff;
	color: #333;
}
.toolbar {
	display: flex;
	flex-direction: column;
	gap: 7px;
	padding: 3px 0 3px 6px;
	border-bottom: 2px solid #ccc;
	background: #eee;
}
.trow {
	display: flex;
	gap: 3px;
}
.tb {
	display: flex;
	flex: none;
	align-items: center;
	justify-content: center;
	width: 32px;
	height: 32px;
	border: 1px solid #ddd;
	background: #f3f3f3;
	font-family: "Liberation Serif", serif;
	line-height: 24px;
}
.tb svg {
	width: 24px;
	height: 24px;
}
.tb.split {
	width: 46px;
}
.tb.on {
	border: 2px solid #3a466c;
	background: #b4bfdd;
}
.tb.off svg {
	opacity: .35;
}
.tb.faint svg, .tb.faint .dd {
	opacity: .3;
}
.tb.b, .tb.i, .tb.u, .tb.s {
	font-size: 20px;
	font-weight: bold;
}
.tb.i {
	font-style: italic;
}
.tb.u {
	text-decoration: underline;
}
.tb.s {
	text-decoration: line-through;
}
.tb.a {
	font-size: 18px;
	font-weight: bold;
}
.tb.gray {
	color: #aaa;
	font-weight: normal;
}
.tb sub, .tb sup {
	font-size: 11px;
	line-height: 11px;
}
.tb sub {
	align-self: flex-end;
	margin-bottom: 6px;
}
.tb sup {
	align-self: flex-start;
	margin-top: 6px;
}
.tb.ba {
	align-items: flex-start;
	font-size: 18px;
	font-weight: bold;
	line-height: 20px;
}
.tb.ba sub {
	margin-bottom: 5px;
	font-size: 18px;
	line-height: 16px;
}
.tb.mini {
	font-size: 11px;
	color: #999;
}
.tb.omega {
	font-size: 20px;
	font-weight: bold;
	box-shadow: inset 0 0 0 3px #f3f3f3, inset 0 0 0 4px #aaa;
}
.tb.abc {
	position: relative;
}
.tb.abc span {
	position: absolute;
	left: 3px;
	top: 0;
	font-size: 13px;
	line-height: 12px;
}
.qm {
	font: bold 14px "Liberation Sans", sans-serif;
	text-anchor: middle;
	fill: #fff;
}
.dd {
	margin-left: 6px;
	border: 5px solid transparent;
	border-top: 6px solid #4fa3dc;
	border-bottom: 0;
}
.sep {
	width: 9px;
	border-left: 1px solid #ccc;
	margin-left: 3px;
	margin-right: -3px;
}
.list {
	position: relative;
	width: 129px;
	height: 32px;
	background: #fff;
	border: 1px solid #ddd;
}
.list select {
	width: 100%;
	height: 30px;
	padding-left: 5px;
	font-family: "Noto Sans", sans-serif;
	font-size: 15px;
}
.list::after {
	content: "";
	position: absolute;
	right: 3px;
	top: 13px;
	border: 5px solid transparent;
	border-top: 6px solid #4fa3dc;
	border-bottom: 0;
}
.list::before {
	content: "";
	position: absolute;
	right: 0;
	top: 0;
	width: 16px;
	height: 30px;
	border-left: 1px solid #ccc;
	background: #f0f0f0;
}
.edit-area {
	display: flex;
	height: 225px;
}
.edit-body {
	flex: 1;
	min-width: 0;
	padding: 19px 21px;
}
.edit-p {
	position: relative;
	height: 46px;
	padding-left: 1px;
	border: 2px dashed #ccc;
	font-family: "DejaVu Sans", sans-serif;
	font-size: 20px;
	line-height: 43px;
	color: #222;
	white-space: nowrap;
}
.ptag {
	position: absolute;
	left: 5px;
	top: -1px;
	font-size: 12px;
	line-height: 12px;
	color: #999;
}
.escroll {
	width: 22px;
	padding: 3px;
	border-left: 1px solid #ddd;
	background: #f3f3f3;
}
.ethumb {
	width: 14px;
	height: 196px;
	border: 1px solid #bbb;
	background: #ccc;
}
.status {
	display: flex;
	justify-content: space-between;
	position: relative;
	height: 31px;
	padding: 0 32px 0 3px;
	border-top: 2px solid #ccc;
	line-height: 30px;
	background: #eee;
}
.grip {
	position: absolute;
	right: -2px;
	bottom: -2px;
	width: 18px;
	height: 18px;
}
.xtd {
	display: flex;
	gap: 14px;
	padding-top: 15px;
}
.xtd button {
	display: flex;
	align-items: center;
	gap: 5px;
	height: 33px;
	padding: 0 6px;
	border: 2px solid #ddd;
	border-radius: 12px;
	background: linear-gradient(#fff, #e0e0e0);
	font-weight: bold;
	color: #444;
	white-space: nowrap;
}

/* right boxes */
.generic {
	padding: 6px 25px 24px 27px;
}
.specific {
	margin-top: 16px;
	padding: 6px 25px 26px 28px;
}
.params {
	border-collapse: separate;
	border-spacing: 0 4px;
}
.params tr {
	height: 44px;
}
.params .r-radio {
	height: 36px;
}
.params .r-img {
	height: 63px;
}
.params th {
	width: 215px;
	padding: 0 4px 0 0;
	text-align: right;
	font-weight: bold;
	color: #777;
	background: #f5f5f5;
	border-bottom: 2px solid #eaeaea;
}
.specific th {
	width: 321px;
	padding-right: 10px;
	font-size: 20px;
	white-space: nowrap;
}
.params th.big {
	padding-right: 11px;
	font-size: 20px;
}
.params td {
	padding: 0 0 0 5px;
	white-space: nowrap;
}
.params td > * {
	vertical-align: middle;
}
.params input[type=text] {
	margin-right: 8px;
}
.params input + span:not(.drop) {
	margin-left: 5px;
}
.params input.long {
	width: 189px;
}
.pre {
	margin-right: 3px;
}
.pencil {
	display: inline-block;
	margin-bottom: 24px;
}
.pencil svg {
	width: 24px;
	height: 26px;
}
.params .r-img .long {
	margin-top: 14px;
}
.params input[type=radio] {
	width: 18px;
	height: 18px;
	margin-right: 13px;
	border: 2px solid #c4c4c4;
	border-radius: 50%;
	background: #e4e4e4;
}
.params input[type=radio]:checked {
	background: radial-gradient(circle, #555 0 4px, #ddd 5px);
}
.r-radio td label {
	display: inline-block;
	margin-right: 13px;
	padding-top: 6px;
}
.drop {
	position: relative;
	display: inline-block;
}
.drop select {
	width: 100%;
	height: 27px;
	padding-left: 6px;
	border: 2px solid #ccc;
	background: #fff;
	font-size: 15px;
}
.drop::after {
	content: "▼";
	position: absolute;
	right: 9px;
	top: 5px;
	font-size: 14px;
	line-height: 16px;
	color: #111;
}
.cur {
	width: 81px;
}
.mode {
	width: 228px;
}
```
